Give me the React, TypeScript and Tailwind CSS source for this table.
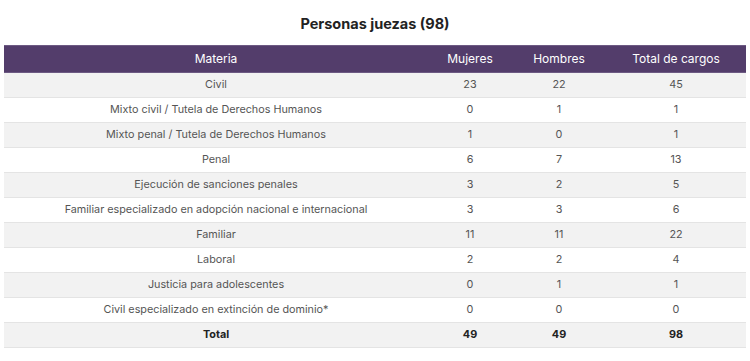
import React from 'react';

type Row = { materia: string; mujeres: number; hombres: number; total: number };

const rows: Row[] = [
  { materia: 'Civil', mujeres: 23, hombres: 22, total: 45 },
  { materia: 'Mixto civil / Tutela de Derechos Humanos', mujeres: 0, hombres: 1, total: 1 },
  { materia: 'Mixto penal / Tutela de Derechos Humanos', mujeres: 1, hombres: 0, total: 1 },
  { materia: 'Penal', mujeres: 6, hombres: 7, total: 13 },
  { materia: 'Ejecución de sanciones penales', mujeres: 3, hombres: 2, total: 5 },
  { materia: 'Familiar especializado en adopción nacional e internacional', mujeres: 3, hombres: 3, total: 6 },
  { materia: 'Familiar', mujeres: 11, hombres: 11, total: 22 },
  { materia: 'Laboral', mujeres: 2, hombres: 2, total: 4 },
  { materia: 'Justicia para adolescentes', mujeres: 0, hombres: 1, total: 1 },
  { materia: 'Civil especializado en extinción de dominio*', mujeres: 0, hombres: 0, total: 0 },
];

export default function App() {
  return (
    <div className="min-h-screen bg-white px-[4px] pt-[14px] font-['Inter',sans-serif]">
      <h2 className="mb-[11px] text-center text-[14.5px] font-bold leading-[20px] text-[#222]">
        Personas juezas (98)
      </h2>

      <table className="w-full border-collapse text-center text-[10.8px] text-[#555]">
        <thead>
          <tr className="h-[27px] border-y border-[#6d5a83] bg-[#533d6b] text-[12px] text-white">
            <th className="w-[424px] font-normal">Materia</th>
            <th className="w-[84px] font-normal">Mujeres</th>
            <th className="w-[94px] font-normal">Hombres</th>
            <th className="font-normal">Total de cargos</th>
          </tr>
        </thead>
        <tbody>
          {rows.map((r, i) => (
            <tr
              key={r.materia}
              className={`h-[25px] border-b border-[#e4e4e4] ${i % 2 === 0 ? 'bg-[#f2f2f2]' : 'bg-white'}`}
            >
              <td>{r.materia}</td>
              <td>{r.mujeres}</td>
              <td>{r.hombres}</td>
              <td>{r.total}</td>
            </tr>
          ))}
          <tr className="h-[25px] border-b border-[#e4e4e4] bg-[#f2f2f2] font-bold text-[#222]">
            <td>Total</td>
            <td>49</td>
            <td>49</td>
            <td>98</td>
          </tr>
        </tbody>
      </table>
    </div>
  );
}
